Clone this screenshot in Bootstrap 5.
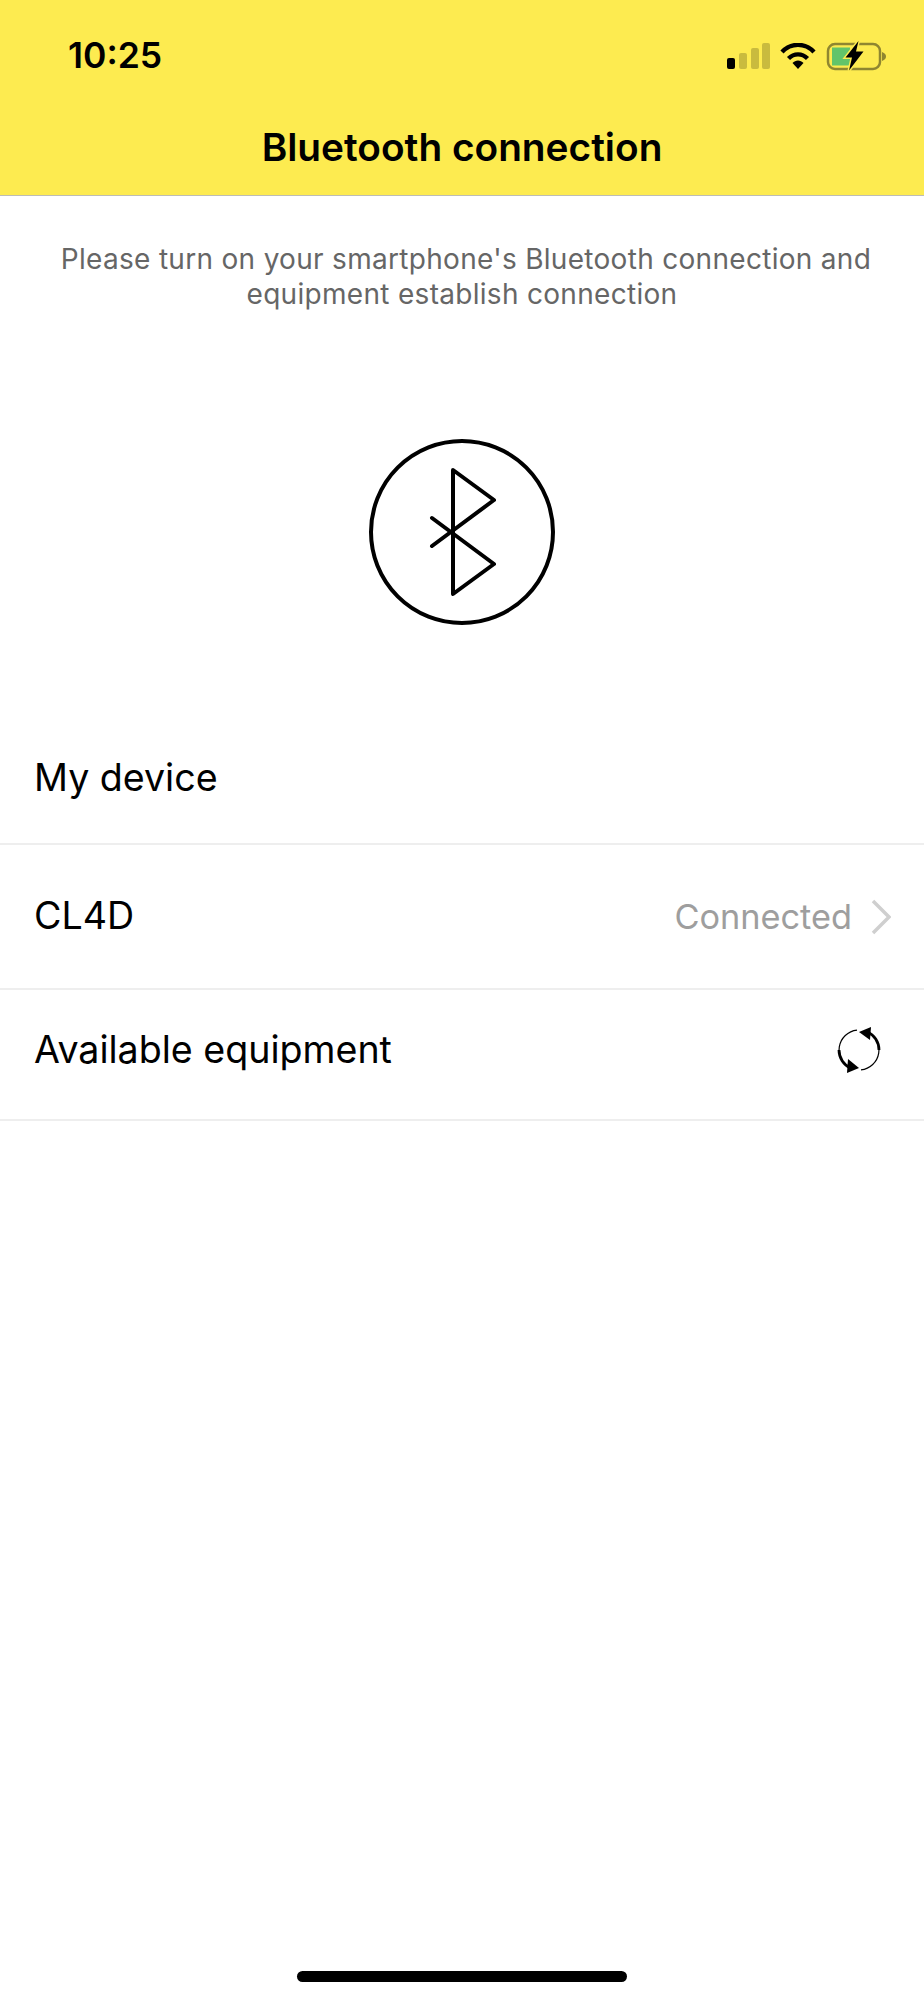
<!DOCTYPE html>
<html lang="en">
<head>
  <meta charset="UTF-8">
  <meta name="viewport" content="width=device-width, initial-scale=1">
  <title>Bluetooth connection</title>
  <link href="https://cdn.jsdelivr.net/npm/bootstrap@5.3.3/dist/css/bootstrap.min.css" rel="stylesheet">
  <style>
    body { font-family: Inter, "Liberation Sans", sans-serif; color: #000; background: #fff; }
    .app-screen { height: 2000px; }
    .top-head { height: 196px; background: #fdeb50; border-bottom: 1px solid #bdbdb5; }
    .status-row { height: 112px; padding: 0 38px 0 68px; }
    .status-time { font-size: 35.5px; font-weight: 600; line-height: 1; }
    .status-icons { gap: 10px; margin-top: -1px; }
    .head-title { font-size: 38.8px; font-weight: 600; line-height: 70px; margin: 0; }
    .intro-text { font-size: 28px; line-height: 35px; color: #666; padding-top: 46px; letter-spacing: .3px; margin: 0; }
    .bt-wrap { padding-top: 125px; height: 403px; }
    .info-row { padding: 0 34px; font-size: 37.6px; border-bottom: 2px solid #eee; }
    .row-a { height: 130px; padding-top: 35px; }
    .row-b { height: 145px; }
    .row-c { height: 131px; padding-bottom: 9px; }
    .muted-val { color: #9e9e9e; font-size: 34.3px; }
    .chev-icon { margin-left: 3px; margin-right: -1px; }
    .home-bar { width: 330px; height: 11px; background: #000; border-radius: 6px; margin-bottom: 18px; }
  </style>
</head>
<body>
  <div class="app-screen d-flex flex-column">

    <!-- status bar and title -->
    <header class="top-head text-center">
      <div class="status-row d-flex justify-content-between align-items-center">
        <span class="status-time">10:25</span>
        <div class="status-icons d-flex align-items-center">
          <svg width="43" height="26" viewBox="0 0 43 26">
            <rect x="0" y="15" width="8" height="11" rx="2" fill="#000"/>
            <rect x="12" y="10" width="8" height="16" rx="2" fill="#c9bb3e"/>
            <rect x="24" y="5" width="8" height="21" rx="2" fill="#c9bb3e"/>
            <rect x="35" y="0" width="8" height="26" rx="2" fill="#c9bb3e"/>
          </svg>
          <svg width="36" height="26" viewBox="0 0 36 26">
            <path d="M2 9C11-.5 25-.5 34 9" fill="none" stroke="#000" stroke-width="4.4"/>
            <path d="M8.5 15.5C14 10 22 10 27.5 15.5" fill="none" stroke="#000" stroke-width="4.4"/>
            <path d="M12.5 20C15.5 16.5 20.5 16.5 23.5 20L18 26Z" fill="#000"/>
          </svg>
          <svg width="60" height="30" viewBox="0 0 60 30">
            <rect x="2" y="3" width="52" height="25" rx="7" fill="none" stroke="#8f8630" stroke-width="2.5"/>
            <path d="M56 11c3 1 4 3 4 4.5s-1 3.5-4 4.5z" fill="#8f8630"/>
            <path d="M6 6.5h18v18H6z" fill="#62c46a"/>
            <path d="M32.5 0 19.5 16.5H26L23 29.5 37.5 10.5H30Z" fill="#000" stroke="#fdeb50" stroke-width="3" paint-order="stroke"/>
          </svg>
        </div>
      </div>
      <h1 class="head-title">Bluetooth connection</h1>
    </header>

    <p class="intro-text text-center"><span class="ps-2">Please turn on your smartphone's Bluetooth connection and</span><br>equipment establish connection</p>

    <div class="bt-wrap text-center">
      <svg width="190" height="190" viewBox="0 0 190 190">
        <circle cx="95" cy="95" r="91" fill="none" stroke="#000" stroke-width="4"/>
        <path d="M65 81 127 127 86 157V33l41 30-62 46" fill="none" stroke="#000" stroke-width="4" stroke-linecap="round" stroke-linejoin="round"/>
      </svg>
    </div>

    <div class="info-row row-a">My device</div>
    <div class="info-row row-b d-flex justify-content-between align-items-center">
      <span>CL4D</span>
      <span class="d-flex align-items-center gap-3">
        <span class="muted-val">Connected</span>
        <svg class="chev-icon" width="20" height="36" viewBox="0 0 20 36"><path d="M2 2 18 18 2 34" fill="none" stroke="#cfcfcf" stroke-width="3.5"/></svg>
      </span>
    </div>
    <div class="info-row row-c d-flex justify-content-between align-items-center">
      <span>Available equipment</span>
      <svg class="me-2" width="46" height="48" viewBox="0 0 46 48">
        <g fill="none" stroke="#000">
          <path d="M31 5.7A20 20 0 0 1 25 43.9" stroke-width="1.2"/>
          <path d="M31 5.7A20 20 0 0 1 43 24" stroke-width="2.8"/>
          <path d="M15 42.3A20 20 0 0 1 21 4.1" stroke-width="1.2"/>
          <path d="M15 42.3A20 20 0 0 1 3 24" stroke-width="2.8"/>
        </g>
        <path d="M23 6 35 1 34 14Z" fill="#000"/>
        <path d="M23 42 11 47 12 33Z" fill="#000"/>
      </svg>
    </div>

    <div class="home-bar mt-auto mx-auto"></div>
  </div>

  <script src="https://cdn.jsdelivr.net/npm/bootstrap@5.3.3/dist/js/bootstrap.bundle.min.js"></script>
</body>
</html>
